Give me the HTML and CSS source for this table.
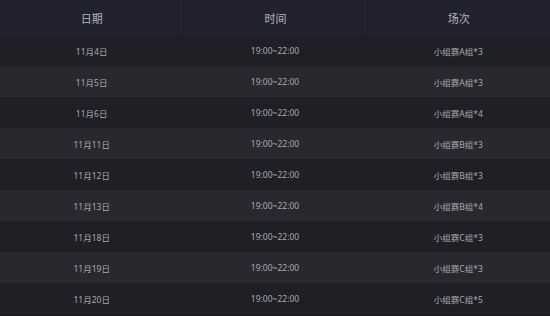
FILE: index.html
```html
<!DOCTYPE html>
<html>
<head>
<meta charset="utf-8">
<link rel="stylesheet" href="styles.css">
</head>
<body>
<div class="table">
  <div class="head">
    <div class="hcell">日期</div>
    <div class="hcell">时间</div>
    <div class="hcell">场次</div>
  </div>
  <div class="row"><div>11月4日</div><div>19:00~22:00</div><div>小组赛A组*3</div></div>
  <div class="row"><div>11月5日</div><div>19:00~22:00</div><div>小组赛A组*3</div></div>
  <div class="row"><div>11月6日</div><div>19:00~22:00</div><div>小组赛A组*4</div></div>
  <div class="row"><div>11月11日</div><div>19:00~22:00</div><div>小组赛B组*3</div></div>
  <div class="row"><div>11月12日</div><div>19:00~22:00</div><div>小组赛B组*3</div></div>
  <div class="row"><div>11月13日</div><div>19:00~22:00</div><div>小组赛B组*4</div></div>
  <div class="row"><div>11月18日</div><div>19:00~22:00</div><div>小组赛C组*3</div></div>
  <div class="row"><div>11月19日</div><div>19:00~22:00</div><div>小组赛C组*3</div></div>
  <div class="row"><div>11月20日</div><div>19:00~22:00</div><div>小组赛C组*5</div></div>
</div>
</body>
</html>
```
FILE: styles.css
```css
html, body {
  margin: 0;
  padding: 0;
  background: #1b1c20;
  width: 550px;
  height: 316px;
  overflow: hidden;
}
.table {
  font-family: "Noto Sans", "Noto Sans CJK SC", sans-serif;
  display: flex;
  flex-direction: column;
}
.head {
  display: grid;
  grid-template-columns: 1fr 1fr 1fr;
  height: 35px;
  background: #22222e;
}
.hcell {
  display: flex;
  align-items: center;
  justify-content: center;
  color: #b4b4bc;
  font-size: 11px;
  border-left: 1px solid #1d1d27;
}
.hcell:first-child {
  border-left: none;
}
.row {
  display: grid;
  grid-template-columns: 1fr 1fr 1fr;
  height: 31px;
  background: #1f2025;
  color: #a9a9ae;
  font-size: 8.5px;
}
.row:nth-child(odd) {
  background: #28282e;
}
.row > div {
  display: flex;
  align-items: center;
  justify-content: center;
}
```
